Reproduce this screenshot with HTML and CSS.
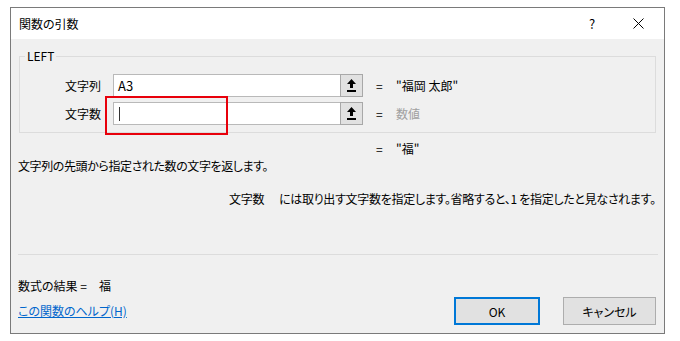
FILE: index.html
```html
<!DOCTYPE html>
<html lang="ja">
<head>
<meta charset="utf-8">
<title>関数の引数</title>
<link rel="stylesheet" href="styles.css">
</head>
<body>
<div class="dialog">
  <div class="titlebar">
    <span class="title">関数の引数</span>
    <span class="tb-btn help">?</span>
    <span class="tb-btn close">
      <svg width="11" height="11" viewBox="0 0 11 11"><path d="M0.5 0.5 L10.5 10.5 M10.5 0.5 L0.5 10.5" stroke="#000" stroke-width="1" fill="none"/></svg>
    </span>
  </div>
  <div class="content">
    <fieldset class="group">
      <legend>LEFT</legend>
      <div class="args">
        <div class="arg-label">文字列</div>
        <div class="ref-input"><span class="ref-text">A3</span></div>
        <div class="ref-btn"><svg width="11" height="14" viewBox="0 0 11 14"><path d="M5.5 0 L1 5 L4 5 L4 9 L7 9 L7 5 L10 5 Z" fill="#000"/><rect x="1" y="11" width="9" height="2" fill="#000"/></svg></div>
        <div class="eq">=</div>
        <div class="val">"福岡 太郎"</div>

        <div class="arg-label">文字数</div>
        <div class="ref-input"><span class="caret"></span></div>
        <div class="ref-btn"><svg width="11" height="14" viewBox="0 0 11 14"><path d="M5.5 0 L1 5 L4 5 L4 9 L7 9 L7 5 L10 5 Z" fill="#000"/><rect x="1" y="11" width="9" height="2" fill="#000"/></svg></div>
        <div class="eq">=</div>
        <div class="val dim">数値</div>
      </div>
    </fieldset>
    <div class="result-row"><span class="eq">=</span><span class="val">"福"</span></div>
    <p class="desc">文字列の先頭から指定された数の文字を返します。</p>
    <p class="detail"><span class="detail-name">文字数</span><span class="detail-text">には取り出す文字数を指定します。省略すると、1 を指定したと見なされます。</span></p>
    <hr class="sep">
    <p class="formula"><span>数式の結果 =</span><span class="formula-val">福</span></p>
    <div class="footer">
      <a class="help-link" href="#">この関数のヘルプ(H)</a>
      <button class="btn btn-ok" type="button">OK</button>
      <button class="btn btn-cancel" type="button">キャンセル</button>
    </div>
  </div>
</div>
<div class="highlight"></div>
</body>
</html>
```

FILE: styles.css
```css
html, body {
  margin: 0;
  padding: 0;
  background: #ffffff;
}
body {
  font-family: "Noto Sans CJK JP", "Noto Sans", sans-serif;
  font-size: 12px;
  line-height: 14px;
  color: #000;
  font-feature-settings: "palt";
  position: relative;
  width: 680px;
  height: 341px;
}
.dialog {
  margin: 7px 0 0 10px;
  width: 653px;
  height: 325px;
  border: 1px solid #7a7a7a;
  background: #f0f0f0;
  display: flex;
  flex-direction: column;
  overflow: hidden;
}
.titlebar {
  height: 31px;
  flex: none;
  background: #ffffff;
  display: flex;
  align-items: center;
  padding-left: 8px;
}
.title {
  flex: 1;
  font-size: 12px;
}
.tb-btn {
  display: flex;
  align-items: center;
  justify-content: center;
}
.help {
  width: 20px;
  margin-right: 26px;
  font-size: 13px;
}
.close {
  width: 20px;
  margin-right: 16px;
}
.content {
  flex: 1;
  padding: 0 8px 0 7px;
  display: flex;
  flex-direction: column;
}
.group {
  margin: 10px 0 0 1px;
  padding: 11px 0 7px 0;
  border: 1px solid #dcdcdc;
  min-width: 0;
}
.group legend {
  padding: 0 2px;
  margin-left: 5px;
  line-height: 14px;
}
.args {
  display: grid;
  grid-template-columns: 93px 227px 23px 33px auto;
  grid-auto-rows: 23px;
  row-gap: 5px;
  align-items: center;
}
.arg-label {
  text-align: right;
  margin-right: 12px;
}
.ref-input {
  height: 23px;
  box-sizing: border-box;
  background: #fff;
  border: 1px solid #b9b9b9;
  border-right: none;
  display: flex;
  align-items: center;
  padding-left: 4px;
}
.ref-text {
  font-size: 13px;
}
.caret {
  width: 1px;
  height: 14px;
  background: #333;
  margin-left: 1px;
}
.ref-btn {
  height: 23px;
  box-sizing: border-box;
  background: #e1e1e1;
  border: 1px solid #a8a8a8;
  display: flex;
  align-items: center;
  justify-content: center;
}
.eq {
  padding-left: 13px;
}
.dim {
  color: #a0a0a0;
}
.result-row {
  margin-top: 9px;
  display: flex;
  padding-left: 345px;
}
.result-row .eq {
  width: 33px;
  box-sizing: border-box;
}
.desc {
  margin: 3px 0 0 0;
  letter-spacing: -0.4px;
}
.detail {
  margin: 19px 0 0 0;
  padding-left: 211px;
  display: flex;
  white-space: pre;
}
.detail-name {
  width: 50px;
  letter-spacing: -0.3px;
}
.detail-text {
  letter-spacing: -0.3px;
}
.sep {
  margin: 48px -2px 0 0;
  border: none;
  border-top: 1px solid #dcdcdc;
  height: 0;
}
.formula {
  margin: 24px 0 0 0;
  display: flex;
}
.formula-val {
  margin-left: 12px;
}
.footer {
  margin-top: 4px;
  display: flex;
  align-items: center;
}
.help-link {
  flex: 1;
  color: #0066cc;
  text-decoration: underline;
  font-size: 12px;
}
.btn {
  font-family: inherit;
  font-feature-settings: "palt";
  font-size: 12px;
  height: 28px;
  background: #e1e1e1;
  color: #000;
  padding: 0;
  box-sizing: border-box;
}
.btn-ok {
  width: 86px;
  border: 2px solid #0078d7;
  margin-right: 23px;
}
.btn-cancel {
  width: 93px;
  border: 1px solid #adadad;
}
.highlight {
  position: absolute;
  left: 105px;
  top: 96px;
  width: 119px;
  height: 35px;
  border: 2px solid #e8000b;
}
```
